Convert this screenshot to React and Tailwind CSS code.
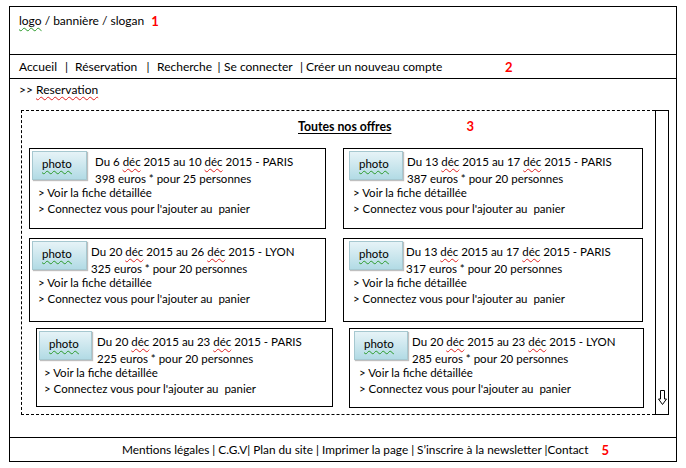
import React from "react";

const cards = [
  [
    { ml: 7, w: 297, h: 81, pl: 2, bw: 55, gap: 8, ind: 8, date: "Du 6 ", d2: " 2015 au 10 ", d3: " 2015 - PARIS", price: "398 euros * pour 25 personnes" },
    { ml: 17, w: 300, h: 81, pl: 5, bw: 54, gap: 4, ind: 9, date: "Du 13 ", d2: " 2015 au 17 ", d3: " 2015 - PARIS", price: "387 euros * pour 20 personnes" },
  ],
  [
    { ml: 7, w: 297, h: 84, pl: 2, bw: 55, gap: 4, ind: 8, date: "Du 20 ", d2: " 2015 au 26 ", d3: " 2015 - LYON", price: "325 euros * pour 20 personnes" },
    { ml: 17, w: 300, h: 84, pl: 5, bw: 54, gap: 3, ind: 9, date: "Du 13 ", d2: " 2015 au 17 ", d3: " 2015 - PARIS", price: "317 euros * pour 20 personnes" },
  ],
  [
    { ml: 14, w: 297, h: 79, pl: 2, bw: 53, gap: 5, ind: 7, date: "Du 20 ", d2: " 2015 au 23 ", d3: " 2015 - PARIS", price: "225 euros * pour 20 personnes" },
    { ml: 16, w: 295, h: 80, pl: 4, bw: 54, gap: 4, ind: 9, date: "Du 20 ", d2: " 2015 au 23 ", d3: " 2015 - LYON", price: "285 euros * pour 20 personnes" },
  ],
];

const rowMt = ["mt-[13px]", "mt-[9px]", "mt-[6px]"];

function Red({ children }) {
  return (
    <span className="underline decoration-wavy decoration-[#e02020] decoration-1 underline-offset-[2px]">
      {children}
    </span>
  );
}

function Green({ children }) {
  return (
    <span className="underline decoration-wavy decoration-[#2a9a2a] decoration-1 underline-offset-[2px]">
      {children}
    </span>
  );
}

function Card({ c }) {
  return (
    <div
      className="border border-black bg-white pt-[2px] box-border shrink-0"
      style={{ marginLeft: c.ml, width: c.w, height: c.h }}
    >
      <div className="flex h-[34px] items-start" style={{ paddingLeft: c.pl }}>
        <div
          className="h-[29px] shrink-0 border border-[#a6c8d0] bg-gradient-to-b from-[#e6f3f7] to-[#b2dbe5] shadow-[1px_1px_1px_rgba(0,0,0,0.25)] pl-[9px] pt-[4px] leading-[16px]"
          style={{ width: c.bw }}
        >
          <Green>photo</Green>
        </div>
        <div className="pt-[2px] leading-[17px] whitespace-pre" style={{ marginLeft: c.gap }}>
          <div>
            {c.date}
            <Red>déc</Red>
            {c.d2}
            <Red>déc</Red>
            {c.d3}
          </div>
          <div>{c.price}</div>
        </div>
      </div>
      <div className="leading-[16px] whitespace-pre" style={{ paddingLeft: c.ind }}>
        <div>&gt; Voir la fiche détaillée</div>
        <div>&gt; Connectez vous pour l'ajouter au  panier</div>
      </div>
    </div>
  );
}

export default function App() {
  return (
    <div className="w-[686px] h-[468px] bg-white pt-[6px] pl-[9px] text-black text-[11.5px] [font-family:Lato,sans-serif]">
      <div className="w-[668px] h-[456px] border border-black flex flex-col">
        {/* Header */}
        <div className="h-[48px] border-b border-black pl-[9px] pt-[6px] leading-[16px] flex items-start shrink-0 text-[12px]">
          <span>
            <Green>logo</Green> / bannière / slogan
          </span>
          <span className="ml-[7px] text-[13px] font-bold text-[#ff0000]">1</span>
        </div>
        {/* Nav */}
        <div className="h-[24px] border-b border-black pl-[9px] flex items-center leading-[16px] shrink-0 text-[12px] whitespace-nowrap">
          <span className="w-[39px] shrink-0">Accueil</span>
          <span className="w-[17px] shrink-0 text-center">|</span>
          <span className="w-[64px] shrink-0">Réservation</span>
          <span className="w-[18px] shrink-0 text-center">|</span>
          <span className="w-[57px] shrink-0">Recherche</span>
          <span className="w-[10px] shrink-0 text-center">|</span>
          <span className="w-[73px] shrink-0">Se connecter</span>
          <span className="w-[9px] shrink-0 text-center">|</span>
          <span className="w-[199px] shrink-0">Créer un nouveau compte</span>
          <span className="text-[13px] font-bold text-[#ff0000]">2</span>
        </div>
        {/* Main */}
        <div className="h-[358px] pt-[3px] shrink-0">
          <div className="pl-[9px] leading-[16px] text-[12px]">
            &gt;&gt; <Red>Reservation</Red>
          </div>
          <div className="mt-[12px] ml-[11px] flex h-[305px]">
            <div className="w-[634px] h-full border border-dashed border-black border-r-0 pt-[7px]">
              <div className="flex items-baseline pl-[276px] leading-[16px]">
                <span className="font-bold underline underline-offset-[2px] text-[12.3px]">Toutes nos offres</span>
                <span className="ml-[75px] text-[13px] font-bold text-[#ff0000]">3</span>
              </div>
              {cards.map((row, i) => (
                <div key={i} className={"flex " + rowMt[i]}>
                  {row.map((c, j) => (
                    <Card key={j} c={c} />
                  ))}
                </div>
              ))}
            </div>
            <div className="w-[14px] h-full border border-black flex flex-col justify-end items-center pb-[9px]">
              <svg width="9" height="15" viewBox="0 0 9 15">
                <path d="M2.5 0.5 H6.5 V9 H8.5 L4.5 14.5 L0.5 9 H2.5 Z" fill="white" stroke="black" strokeWidth="1" />
              </svg>
            </div>
          </div>
        </div>
        {/* Footer */}
        <div className="flex-1 border-t border-black flex items-center pl-[112px] leading-[16px] text-[11.8px]">
          <span className="whitespace-pre">Mentions légales | C.G.V| Plan du site | Imprimer la page | S’inscrire à la newsletter |Contact</span>
          <span className="ml-[13px] text-[13px] font-bold text-[#ff0000]">5</span>
        </div>
      </div>
    </div>
  );
}
